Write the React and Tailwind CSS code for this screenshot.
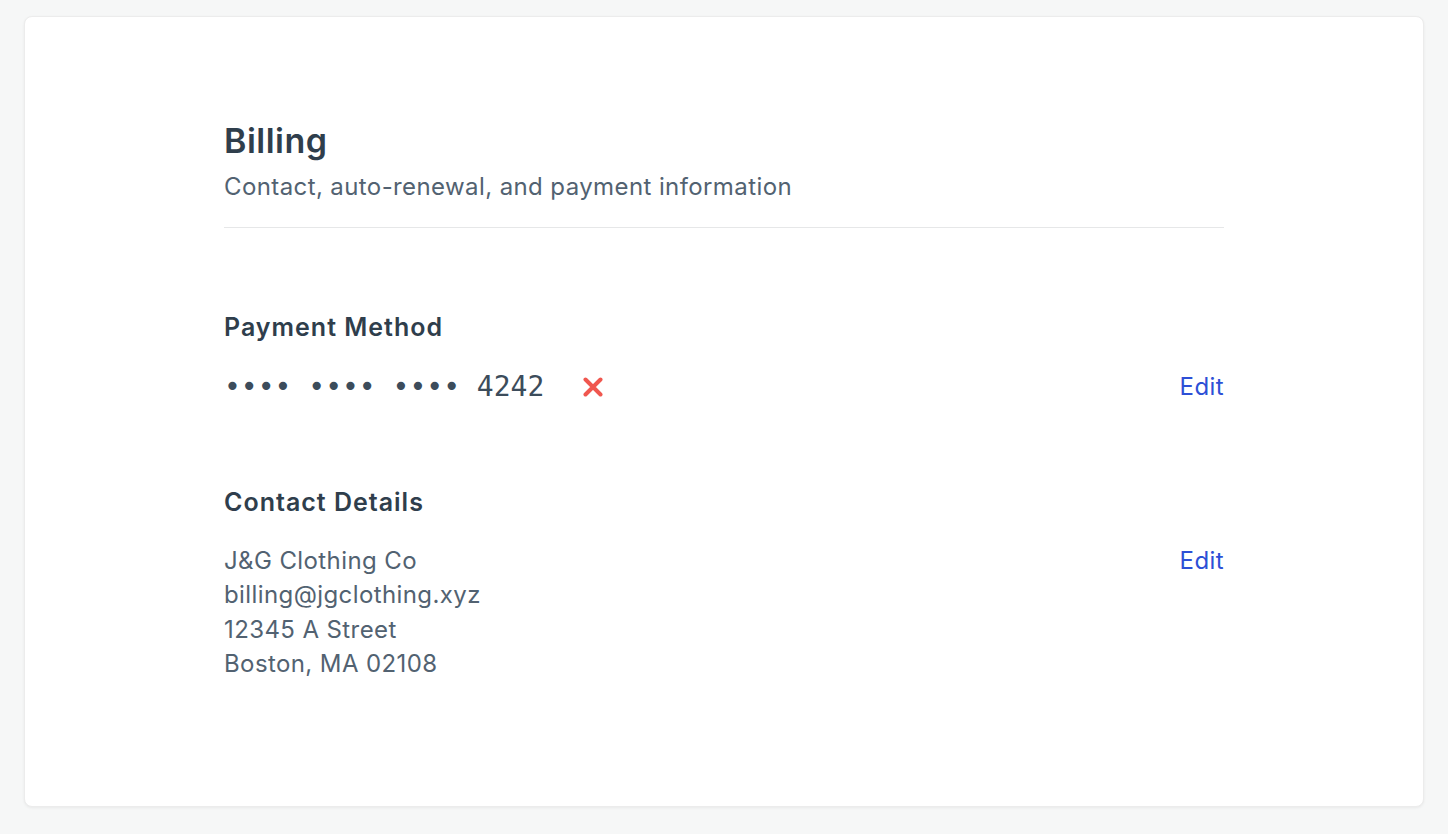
const App = () => {
    return (
        <div className="min-h-screen w-full bg-[#f6f7f7] px-6 pt-4 pb-[27px] font-['Inter',sans-serif]">
            <div className="bg-white rounded-lg border border-[#ececec] shadow-[0_1px_3px_rgba(0,0,0,0.06)] h-[791px] px-[199px] pt-[104px]">

                <h1 className="text-[34px] leading-[40px] font-semibold text-[#2f3e4c] tracking-[0.5px]">Billing</h1>
                <p className="text-[24px] leading-[32px] text-[#526271] tracking-[0.4px] mt-[10px]">Contact, auto-renewal, and payment information</p>
                <div className="h-px bg-[#e6e7e8] mt-[24px]"></div>

                <div className="mt-[83px]">
                    <h2 className="text-[25px] leading-[32px] font-semibold text-[#2f3e4c] tracking-[1px]">Payment Method</h2>
                    <div className="flex items-center justify-between mt-[26px]">
                        <div className="flex items-center">
                            <span className="text-[28px] leading-[36px] text-[#3c4c5b] font-['DejaVu_Sans_Mono',monospace] whitespace-pre">•••• •••• •••• 4242</span>
                            <svg className="ml-[39px]" width="20" height="20" viewBox="0 0 20 20">
                                <path d="M2.5 2.5 L17.5 17.5 M17.5 2.5 L2.5 17.5" stroke="#f0574f" strokeWidth="4" strokeLinecap="round" />
                            </svg>
                        </div>
                        <a className="text-[24px] leading-[36px] text-[#2d4fd6] tracking-[0.4px]">Edit</a>
                    </div>
                </div>

                <div className="mt-[81px]">
                    <h2 className="text-[25px] leading-[32px] font-semibold text-[#2f3e4c] tracking-[1px]">Contact Details</h2>
                    <div className="flex justify-between mt-[26px]">
                        <div className="text-[24px] leading-[34.4px] text-[#526271] tracking-[0.4px]">
                            <div>J&amp;G Clothing Co</div>
                            <div>billing@jgclothing.xyz</div>
                            <div>12345 A Street</div>
                            <div>Boston, MA 02108</div>
                        </div>
                        <a className="text-[24px] leading-[34.4px] text-[#2d4fd6] tracking-[0.4px]">Edit</a>
                    </div>
                </div>
            </div>
        </div>
    )
}
export default App
